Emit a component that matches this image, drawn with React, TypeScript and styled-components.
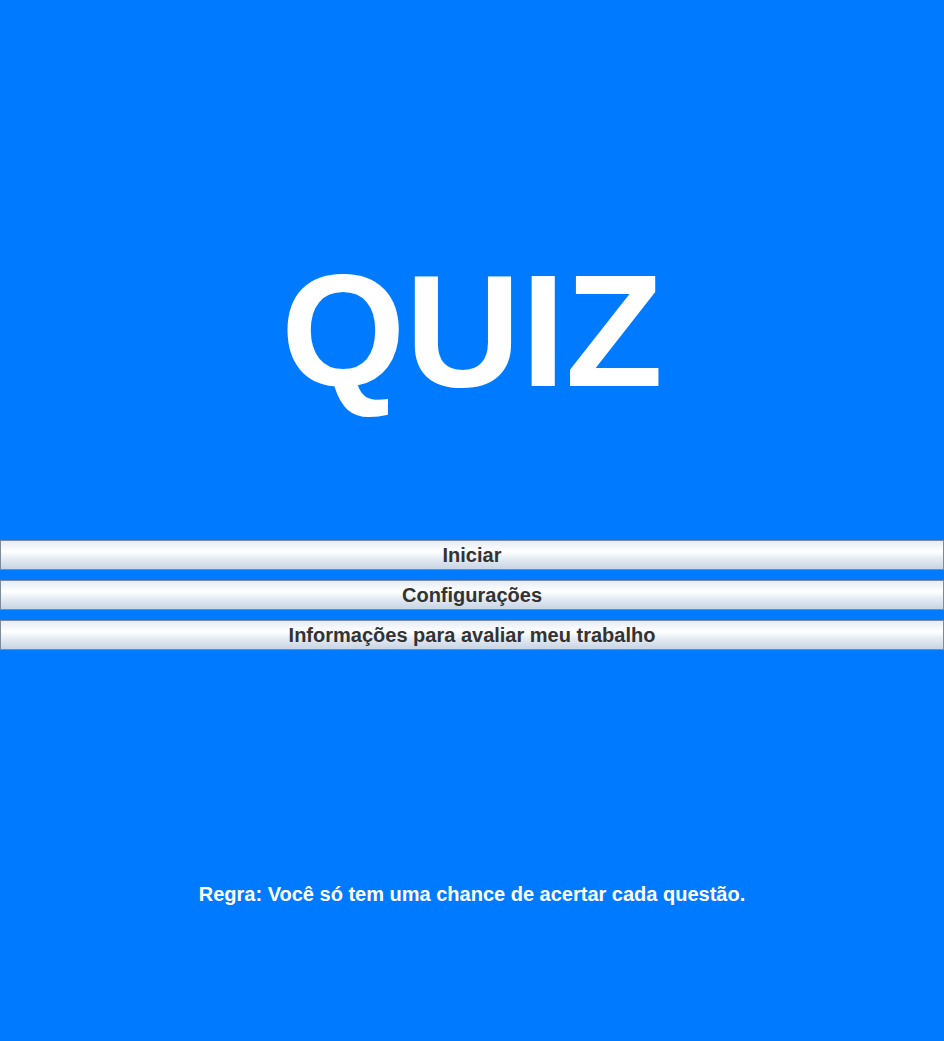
import React from "react";
import styled, { createGlobalStyle } from "styled-components";

const GlobalStyle = createGlobalStyle`
  html, body {
    margin: 0;
    padding: 0;
    background: #007bff;
  }
  body {
    font-family: "Liberation Sans", Arial, sans-serif;
  }
`;

const Page = styled.main`
  width: 944px;
  height: 1041px;
  background: #007bff;
  display: flex;
  flex-direction: column;
  padding-top: 251px;
  box-sizing: border-box;
`;

const Title = styled.h1`
  margin: 0;
  font-family: "Liberation Sans", Arial, sans-serif;
  font-weight: 700;
  font-size: 160px;
  line-height: 160px;
  height: 160px;
  color: #ffffff;
  text-align: center;
`;

const Menu = styled.nav`
  margin-top: 129px;
  display: flex;
  flex-direction: column;
  gap: 10px;
`;

const MenuButton = styled.button`
  display: block;
  width: 100%;
  height: 30px;
  margin: 0;
  padding: 0;
  box-sizing: border-box;
  border: 1px solid #7c8b9b;
  background: linear-gradient(
    to bottom,
    #e6ecf3 0%,
    #f6f9fc 25%,
    #ffffff 38%,
    #e3eaf2 65%,
    #c6d4e4 100%
  );
  font-family: "Liberation Sans", Arial, sans-serif;
  font-weight: 700;
  font-size: 20px;
  line-height: 28px;
  color: #333333;
  text-align: center;
  cursor: pointer;
`;

const Rule = styled.p`
  margin: 232px 0 0;
  font-family: "Liberation Sans", Arial, sans-serif;
  font-weight: 700;
  font-size: 20px;
  line-height: 24px;
  color: #ffffff;
  text-align: center;
`;

const items = [
  "Iniciar",
  "Configurações",
  "Informações para avaliar meu trabalho",
];

export default function App() {
  return (
    <>
      <GlobalStyle />
      <Page>
        <Title>QUIZ</Title>
        <Menu>
          {items.map((label) => (
            <MenuButton key={label}>{label}</MenuButton>
          ))}
        </Menu>
        <Rule>Regra: Você só tem uma chance de acertar cada questão.</Rule>
      </Page>
    </>
  );
}
